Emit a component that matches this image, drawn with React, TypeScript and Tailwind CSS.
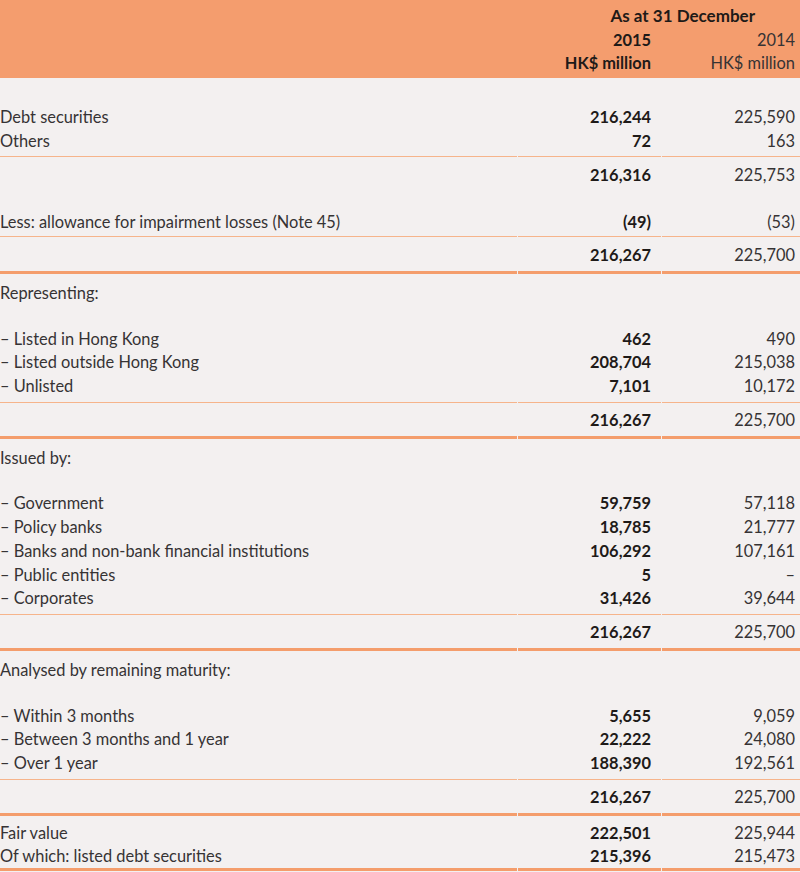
const grid = "grid grid-cols-[517px_143px_138px] gap-x-px";
const thin = "border-b border-[#f6b48b]";
const thick = "border-b-[3px] border-[#f49d6c]";

type RowProps = {
  label?: string;
  a?: string;
  b?: string;
  cell?: string;
};

function Row({ label = "", a = "", b = "", cell = "" }: RowProps) {
  return (
    <div className={grid}>
      <div className={`text-left ${cell}`}>{label}</div>
      <div className={`text-right pr-[10px] font-bold text-[#1e1a18] ${cell}`}>{a}</div>
      <div className={`text-right pr-[5px] ${cell}`}>{b}</div>
    </div>
  );
}

function Items({ rows, className = "" }: { rows: string[][]; className?: string }) {
  return (
    <div className={className}>
      {rows.map((r, i) => (
        <Row
          key={r[0]}
          label={r[0]}
          a={r[1]}
          b={r[2]}
          cell={i === rows.length - 1 ? `pb-[4px] ${thin}` : ""}
        />
      ))}
    </div>
  );
}

function Total({ a, b }: { a: string; b: string }) {
  return <Row a={a} b={b} cell={`pt-[5px] pb-[4px] ${thick}`} />;
}

function Heading({ text }: { text: string }) {
  return <div className="pt-[7px]">{text}</div>;
}

export default function App() {
  return (
    <div
      className="min-h-screen w-[800px] bg-[#f3f0f0] text-[16.4px] leading-[23.75px] text-[#363334]"
      style={{ fontFamily: "Lato, 'Liberation Sans', sans-serif" }}
    >
      <div className="h-[78px] bg-[#f49d6e] pt-[4px] leading-[23.5px]">
        <div className={grid}>
          <div />
          <div className="col-span-2 text-right pr-[45px] font-bold text-[17px] text-[#1e1a18]">As at 31 December</div>
        </div>
        <Row a="2015" b="2014" />
        <Row a="HK$ million" b="HK$ million" />
      </div>

      <div className="pt-[27px]">
        <Row label="Debt securities" a="216,244" b="225,590" />
        <Row label="Others" a="72" b="163" cell={`pb-[3px] ${thin}`} />
      </div>
      <Row a="216,316" b="225,753" cell="pt-[6px]" />
      <div className="mt-[24px]">
        <Row
          label="Less: allowance for impairment losses (Note 45)"
          a="(49)"
          b="(53)"
          cell={`pb-[2px] ${thin}`}
        />
      </div>
      <Row a="216,267" b="225,700" cell={`pt-[6px] pb-[4px] ${thick}`} />

      <Heading text="Representing:" />
      <Items
        className="mt-[22px]"
        rows={[
          ["– Listed in Hong Kong", "462", "490"],
          ["– Listed outside Hong Kong", "208,704", "215,038"],
          ["– Unlisted", "7,101", "10,172"],
        ]}
      />
      <Total a="216,267" b="225,700" />

      <Heading text="Issued by:" />
      <Items
        className="mt-[22px]"
        rows={[
          ["– Government", "59,759", "57,118"],
          ["– Policy banks", "18,785", "21,777"],
          ["– Banks and non-bank financial institutions", "106,292", "107,161"],
          ["– Public entities", "5", "–"],
          ["– Corporates", "31,426", "39,644"],
        ]}
      />
      <Total a="216,267" b="225,700" />

      <Heading text="Analysed by remaining maturity:" />
      <Items
        className="mt-[22px]"
        rows={[
          ["– Within 3 months", "5,655", "9,059"],
          ["– Between 3 months and 1 year", "22,222", "24,080"],
          ["– Over 1 year", "188,390", "192,561"],
        ]}
      />
      <Total a="216,267" b="225,700" />

      <div className="pt-[5px]">
        <Row label="Fair value" a="222,501" b="225,944" />
        <Row label="Of which: listed debt securities" a="215,396" b="215,473" cell={thick} />
      </div>
    </div>
  );
}
